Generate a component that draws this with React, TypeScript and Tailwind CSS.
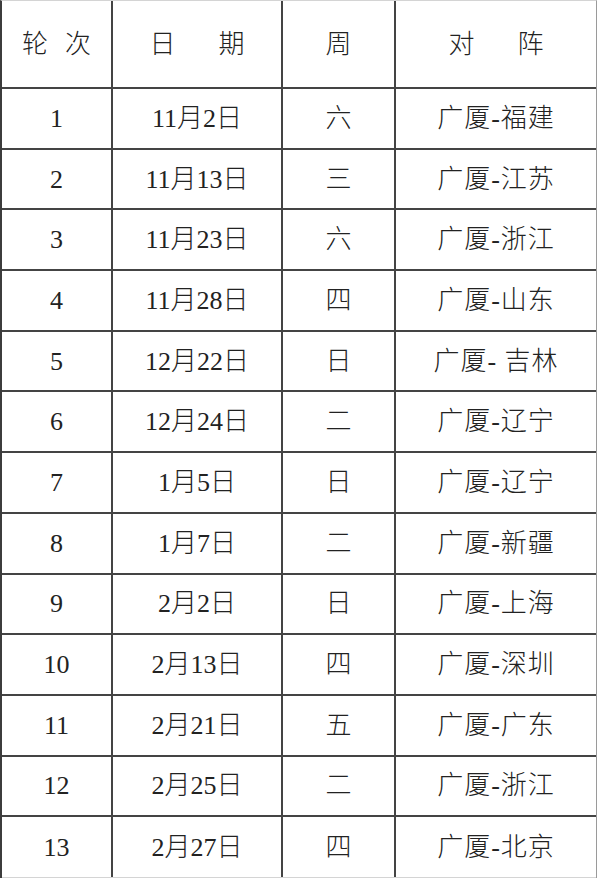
const rows: [string, string, string, string][] = [
  ["1", "11月2日", "六", "广厦-福建"],
  ["2", "11月13日", "三", "广厦-江苏"],
  ["3", "11月23日", "六", "广厦-浙江"],
  ["4", "11月28日", "四", "广厦-山东"],
  ["5", "12月22日", "日", "广厦- 吉林"],
  ["6", "12月24日", "二", "广厦-辽宁"],
  ["7", "1月5日", "日", "广厦-辽宁"],
  ["8", "1月7日", "二", "广厦-新疆"],
  ["9", "2月2日", "日", "广厦-上海"],
  ["10", "2月13日", "四", "广厦-深圳"],
  ["11", "2月21日", "五", "广厦-广东"],
  ["12", "2月25日", "二", "广厦-浙江"],
  ["13", "2月27日", "四", "广厦-北京"],
];

const font = { fontFamily: '"Liberation Serif", "Noto Sans CJK SC", serif' };

export default function App() {
  return (
    <div
      className="w-[597px] h-[878px] overflow-hidden bg-white text-[26px] font-light text-[#222] border-t border-t-[#d4d4d4] border-l-2 border-l-[#3c3c3c] border-r border-r-[#9a9a9a]"
      style={font}
    >
      {/* header */}
      <div className="flex h-[88px] border-b-2 border-b-[#444]">
        <div className="w-[111px] flex items-center justify-center gap-[17px] border-r-2 border-r-[#444]">
          <span>轮</span>
          <span>次</span>
        </div>
        <div className="w-[170px] flex items-center justify-center gap-[43px] border-r-2 border-r-[#444]">
          <span>日</span>
          <span>期</span>
        </div>
        <div className="w-[113px] flex items-center justify-center border-r-2 border-r-[#444]">
          周
        </div>
        <div className="flex-1 flex items-center justify-center gap-[43px]">
          <span>对</span>
          <span>阵</span>
        </div>
      </div>

      {rows.map(([n, date, day, match], i) => (
        <div
          key={n}
          className={
            i === rows.length - 1
              ? "flex h-[60.7px] border-b border-b-[#d4d4d4]"
              : "flex h-[60.7px] border-b-2 border-b-[#444]"
          }
        >
          <div className="w-[111px] flex items-center justify-center border-r-2 border-r-[#444]">{n}</div>
          <div className="w-[170px] flex items-center justify-center border-r-2 border-r-[#444]">{date}</div>
          <div className="w-[113px] flex items-center justify-center border-r-2 border-r-[#444]">{day}</div>
          <div className="flex-1 flex items-center justify-center whitespace-pre tracking-[1px]">{match}</div>
        </div>
      ))}
    </div>
  );
}
